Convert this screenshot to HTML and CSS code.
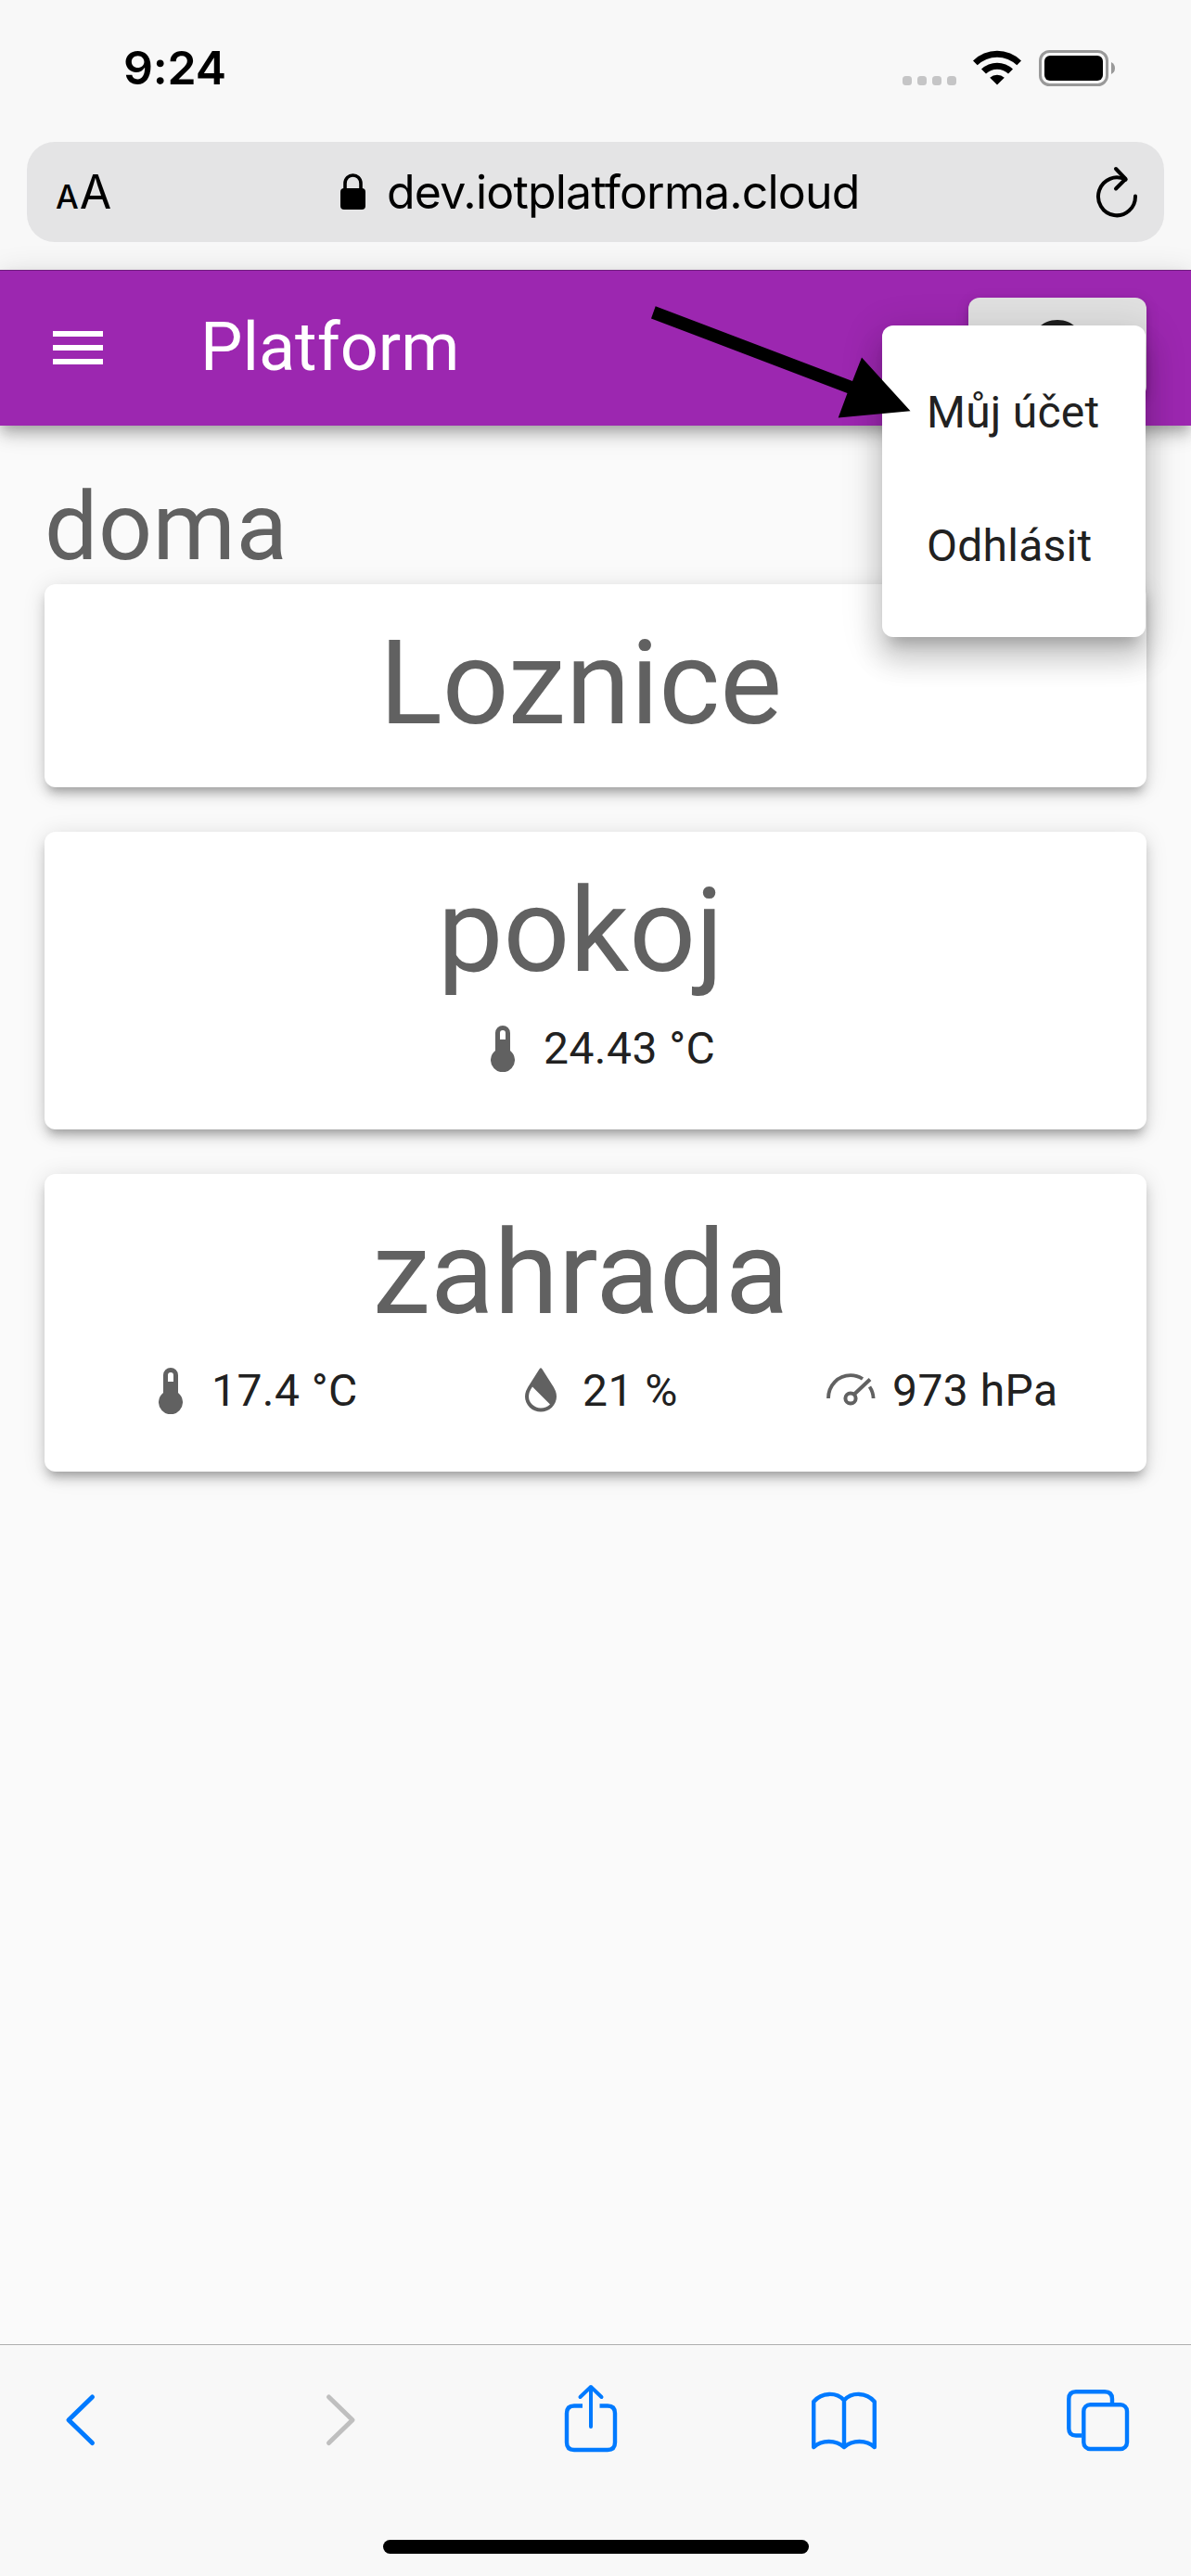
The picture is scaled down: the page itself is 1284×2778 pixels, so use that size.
FILE: index.html
```html
<!DOCTYPE html>
<html lang="cs">
<head>
<meta charset="utf-8">
<title>Platform</title>
<link rel="stylesheet" href="styles.css">
</head>
<body>
<div class="screen">
  <div class="status">
    <span class="time">9:24</span>
    <div class="status-icons">
      <svg class="signal" width="58" height="10" viewBox="0 0 58 10" fill="#c5c5c6"><rect width="10" height="10" rx="3.5"/><rect x="16" width="10" height="10" rx="3.5"/><rect x="32" width="10" height="10" rx="3.5"/><rect x="48" width="10" height="10" rx="3.5"/></svg>
      <svg class="wifi" width="52" height="38" viewBox="0 0 52 38"><path d="M0 11.500A37 37 0 0 1 52 11.500L47.300 16.300A30.500 30.500 0 0 0 4.700 16.300Z"/><path d="M9 20.500A24.500 24.500 0 0 1 43 20.500L38 25.500A17.500 17.500 0 0 0 14 25.500Z"/><path d="M18.200 29.800A11.500 11.500 0 0 1 33.800 29.800L26 37.500Z"/></svg>
      <svg class="battery" width="82" height="39" viewBox="0 0 82 39"><rect x="1.500" y="1.500" width="72" height="36" rx="10" fill="none" stroke="#999" stroke-width="3"/><rect x="6" y="6" width="63" height="27" rx="6"/><path d="M78 13Q82 15 82 19.500T78 26Z" fill="#999"/></svg>
    </div>
  </div>
  <div class="address">
    <span class="text-size"><span class="small-a">A</span><span class="big-a">A</span></span>
    <svg class="lock" width="27" height="40" viewBox="0 0 27 40"><rect y="16" width="27" height="23" rx="4"/><path d="M5 18V11C5 -1 22 -1 22 11V18" fill="none" stroke="#000" stroke-width="3.600"/></svg>
    <span class="url">dev.iotplatforma.cloud</span>
    <svg class="reload" width="48" height="58" viewBox="1180 179 48 58" fill="none" stroke="#000" stroke-width="4" stroke-linecap="round" stroke-linejoin="round"><path d="M1224 211.500A20 20.500 0 1 1 1213.500 193.800"/><path d="M1203 182L1213.500 193L1203 203.500"/></svg>
  </div>

  <header class="appbar">
    <svg class="menu-icon" width="72" height="72" viewBox="0 0 24 24" fill="#fff"><path d="M3 18h18v-2H3v2zm0-5h18v-2H3v2zm0-7v2h18V6H3z"/></svg>
    <h1>Platform</h1>
    <div class="account">
      <svg width="72" height="72" viewBox="0 0 24 24" fill="#1f1f1f"><path d="M12 2C6.480 2 2 6.480 2 12s4.480 10 10 10 10-4.480 10-10S17.520 2 12 2zm0 3c1.660 0 3 1.340 3 3s-1.340 3-3 3-3-1.340-3-3 1.340-3 3-3zm0 14.200c-2.500 0-4.710-1.280-6-3.220.030-1.990 4-3.080 6-3.080 1.990 0 5.970 1.090 6 3.080-1.290 1.940-3.500 3.220-6 3.220z"/></svg>
      <div class="menu">
        <div class="menu-item">Můj účet</div>
        <div class="menu-item">Odhlásit</div>
      </div>
    </div>
    <svg class="pointer" width="282" height="124" viewBox="701 329 282 124"><path d="M706.700 330.300L919 411L929 385.500L981.500 443.300L903.700 450.500L913.500 424L702 343.500Z"/></svg>
  </header>

  <main>
    <h2>doma</h2>
    <section class="card"><h3>Loznice</h3></section>
    <section class="card">
      <h3>pokoj</h3>
      <div class="values single">
        <div class="value"><svg class="thermo" width="26" height="50" viewBox="0 0 26 50"><path fill-rule="evenodd" d="M5 8a8 8 0 0 1 16 0V27A13 13 0 1 1 5 27ZM10 8V15H16V8a3 3 0 0 0-6 0Z"/></svg><span>24.43 °C</span></div>
      </div>
    </section>
    <section class="card">
      <h3>zahrada</h3>
      <div class="values triple">
        <div class="value"><svg class="thermo" width="26" height="50" viewBox="0 0 26 50"><path fill-rule="evenodd" d="M5 8a8 8 0 0 1 16 0V27A13 13 0 1 1 5 27ZM10 8V15H16V8a3 3 0 0 0-6 0Z"/></svg><span>17.4 °C</span></div>
        <div class="value"><svg class="drop" width="34" height="48" viewBox="0 0 34 48"><path fill-rule="evenodd" d="M15.800 1Q17 -.5 18.200 1L29 18Q34 25 34 31A17 16.500 0 0 1 0 31Q0 25 5 18ZM8 20.500Q4 26 4 31A13 12.800 0 0 0 17 43.500Q23 43.500 27 39.500Z"/></svg><span>21 %</span></div>
        <div class="value"><svg class="gauge" width="53" height="36" viewBox="0 0 53 36" fill="none" stroke="#616161"><path d="M2 27C2 13 12.500 2.200 26 2.200Q33 2.200 39 6" stroke-width="3.800"/><path d="M46.500 14.500Q50.300 20 50.600 27" stroke-width="3.800"/><circle cx="26" cy="27" r="5.600" stroke-width="4"/><path d="M30 22.500L47 6.500" stroke-width="4"/></svg><span>973 hPa</span></div>
      </div>
    </section>
  </main>

  <footer>
    <nav>
      <svg width="35" height="80" viewBox="69 2570 35 80"><path d="M99.500 2585L74 2609.800L99.500 2634.500"/></svg>
      <svg class="disabled" width="35" height="80" viewBox="350 2570 35 80"><path d="M354.500 2585L380 2609.800L354.500 2634.500"/></svg>
      <svg width="60" height="80" viewBox="607 2570 60 80"><path d="M637 2574V2617M625.500 2585L637 2574L648.500 2585" stroke-width="4"/><path d="M628 2594.500H619Q611 2594.500 611 2602.500V2634Q611 2642 619 2642H655Q663 2642 663 2634V2602.500Q663 2594.500 655 2594.500H646.500" stroke-linecap="butt" stroke-width="4.400"/></svg>
      <svg width="74" height="80" viewBox="873 2570 74 80"><path d="M877.200 2639V2590C886 2579.500 902 2579.500 910 2588.500C918 2579.500 934 2579.500 942.800 2590V2639C934 2631 919 2631 910 2639C901 2631 886 2631 877.200 2639ZM910 2588.500V2639" stroke-width="4.400"/></svg>
      <svg width="71" height="80" viewBox="1148 2570 71 80"><path d="M1166 2626.500H1160Q1152.300 2626.500 1152.300 2619V2587Q1152.300 2579.200 1160 2579.200H1191Q1199 2579.200 1199 2587V2593" stroke-width="4.400" stroke-linecap="butt"/><rect x="1168.300" y="2593.200" width="46.700" height="47.800" rx="7" stroke-width="4.400"/></svg>
    </nav>
    <div class="home"></div>
  </footer>
</div>
</body>
</html>
```
FILE: styles.css
```css
* { box-sizing: border-box; }
body { margin: 0; background: #fafafa; font-family: Roboto, sans-serif; }
svg { display: block; flex: none; }
h1, h2, h3 { margin: 0; font-weight: 400; }
.screen { width: 1284px; height: 2778px; display: flex; flex-direction: column; overflow: hidden; }

.status { height: 153px; background: #f8f8f8; display: flex; justify-content: space-between; align-items: flex-start; padding: 43px 82px 0 133px; font-family: Inter, sans-serif; }
.time { font-size: 50px; line-height: 60px; font-weight: 600; letter-spacing: -0.2px; }
.status-icons { display: flex; height: 49px; align-items: flex-end; }
.wifi { margin-left: 18px; }
.battery { margin-left: 19px; margin-bottom: -1px; }

.address { height: 138px; background: #f8f8f8; display: flex; align-items: flex-start; padding: 0 29px; position: relative; z-index: 0; font-family: Inter, sans-serif; }
.address::before { content: ""; position: absolute; z-index: -1; left: 29px; top: 0; width: 1226px; height: 108px; border-radius: 30px; background: #e4e4e5; }
.text-size { width: 338px; padding-left: 31px; line-height: 108px; white-space: nowrap; }
.small-a { font-size: 35px; font-weight: 500; letter-spacing: 1px; }
.big-a { font-size: 50px; }
.lock { margin-top: 34px; }
.url { margin-left: 23px; width: 763px; font-size: 50px; line-height: 108px; letter-spacing: -0.8px; white-space: nowrap; }
.reload { margin-top: 26px; }

.appbar { height: 168px; flex: none; background: #9c27b0; border-top: 1px solid #6f1c7e; display: flex; align-items: flex-start; padding: 0 48px; color: #fff; position: relative; z-index: 2; box-shadow: 0 6px 12px -3px rgba(0,0,0,.2), 0 12px 15px 0 rgba(0,0,0,.14), 0 3px 30px 0 rgba(0,0,0,.12); }
.menu-icon { margin-top: 47px; }
.appbar h1 { margin: 35px auto 0 96px; font-size: 72px; line-height: 96px; }
.account { position: relative; width: 192px; height: 108px; margin-top: 29px; display: flex; justify-content: center; align-items: center; background: #e0e0e0; border-radius: 12px; box-shadow: 0 9px 3px -6px rgba(0,0,0,.2), 0 6px 6px 0 rgba(0,0,0,.14), 0 3px 15px 0 rgba(0,0,0,.12); }
.menu { position: absolute; top: 30px; right: 1px; width: 284px; height: 336px; padding: 22px 48px; background: #fff; color: #212121; border-radius: 12px; box-shadow: 0 15px 15px -9px rgba(0,0,0,.2), 0 24px 30px 3px rgba(0,0,0,.14), 0 9px 42px 6px rgba(0,0,0,.12); }
.menu-item { height: 144px; line-height: 144px; font-size: 48px; letter-spacing: .25px; white-space: nowrap; }
.pointer { position: absolute; left: 701px; top: 37px; }

main { flex: 1; padding: 45px 48px 0; color: #616161; }
h2 { font-size: 102px; line-height: 128px; height: 126px; letter-spacing: .45px; }
.card { height: 321px; margin-bottom: 48px; padding: 34px 48px 0; background: #fff; border-radius: 12px; box-shadow: 0 9px 9px -6px rgba(0,0,0,.2), 0 9px 12px 0 rgba(0,0,0,.14), 0 3px 24px 0 rgba(0,0,0,.12); }
.card:first-of-type { height: 219px; }
h3 { font-size: 126px; line-height: 147px; padding-right: 32px; text-align: center; }
.values { display: grid; margin-top: 17px; }
.single { grid-template-columns: 1fr; padding-left: 433px; }
.triple { grid-template-columns: 395px 325px 1fr; padding-left: 75px; }
.value { display: flex; align-items: flex-start; height: 72px; font-size: 48px; line-height: 72px; letter-spacing: .45px; color: #212121; white-space: nowrap; }
.value svg { fill: #616161; }
.value .gauge { fill: none; margin-top: 17px; margin-right: 18px; }
.thermo { margin: 11px 31px 0 0; }
.drop { margin: 11px 28px 0 0; }

footer { height: 250px; flex: none; border-top: 1px solid #aeaeae; background: #f8f8f8; }
nav { display: grid; grid-template-columns: 281px 257px 266px 275px auto; padding: 41px 0 0 69px; }
nav svg { fill: none; stroke: #007aff; stroke-width: 5; stroke-linecap: round; stroke-linejoin: round; }
nav .disabled { stroke: #bfbfbf; }
.home { width: 459px; height: 15px; margin: 89px auto 0; border-radius: 8px; background: #000; }
```
